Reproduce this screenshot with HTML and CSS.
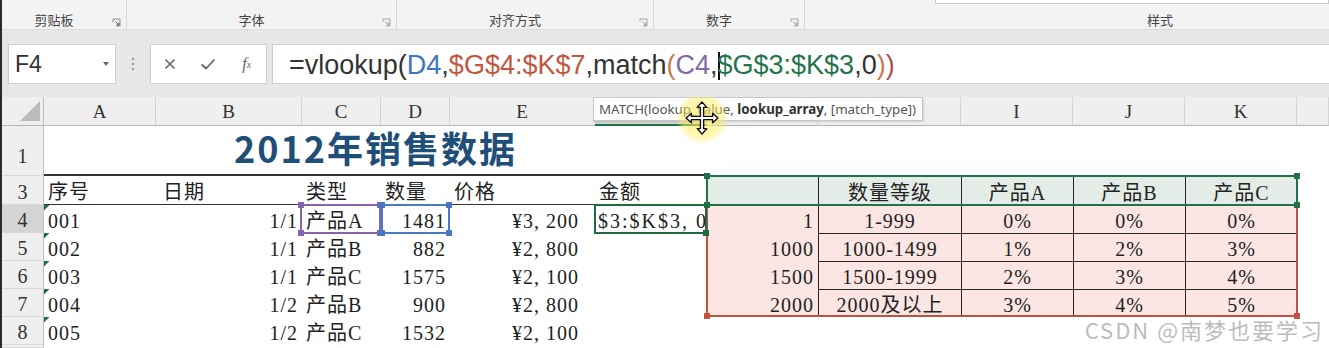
FILE: index.html
```html
<!DOCTYPE html>
<html lang="zh-CN">
<head>
<meta charset="UTF-8">
<meta name="viewport" content="width=device-width, initial-scale=1.0">
<title>2012年销售数据</title>
<link rel="stylesheet" href="styles.css">
</head>
<body>
<div class="app">

  <!-- ribbon, only the group labels are in view -->
  <div class="ribbon">
    <div class="group g1">
      <div class="glabel"><span>剪贴板</span><i class="launch"><svg width="9" height="9" viewBox="0 0 9 9"><path d="M1 4V1h7v7H4" fill="none" stroke="#8a8a8a"/><path d="M3.5 3.5L7 7M7 4.5V7H4.5" fill="none" stroke="#555"/></svg></i></div>
    </div>
    <div class="group g2">
      <div class="glabel"><span>字体</span><i class="launch"><svg width="9" height="9" viewBox="0 0 9 9"><path d="M1 4V1h7v7H4" fill="none" stroke="#a8a8a8"/><path d="M3.5 3.5L7 7M7 4.5V7H4.5" fill="none" stroke="#999"/></svg></i></div>
    </div>
    <div class="group g3">
      <div class="glabel"><span>对齐方式</span><i class="launch"><svg width="9" height="9" viewBox="0 0 9 9"><path d="M1 4V1h7v7H4" fill="none" stroke="#a8a8a8"/><path d="M3.5 3.5L7 7M7 4.5V7H4.5" fill="none" stroke="#999"/></svg></i></div>
    </div>
    <div class="group g4">
      <div class="glabel"><span>数字</span><i class="launch"><svg width="9" height="9" viewBox="0 0 9 9"><path d="M1 4V1h7v7H4" fill="none" stroke="#a8a8a8"/><path d="M3.5 3.5L7 7M7 4.5V7H4.5" fill="none" stroke="#999"/></svg></i></div>
    </div>
    <div class="group g5">
      <div class="gallery"></div>
      <div class="glabel"><span>样式</span></div>
    </div>
  </div>

  <!-- formula bar -->
  <div class="fbar">
    <div class="namebox"><span>F4</span><i class="drop"></i></div>
    <div class="dots"><svg width="4" height="14" viewBox="0 0 4 14"><circle cx="2" cy="2" r="1.2" fill="#9a9a9a"/><circle cx="2" cy="7" r="1.2" fill="#9a9a9a"/><circle cx="2" cy="12" r="1.2" fill="#9a9a9a"/></svg></div>
    <div class="btns">
      <span class="btn"><svg width="12" height="12" viewBox="0 0 12 12"><path d="M1.5 1.5l9 9M10.5 1.5l-9 9" stroke="#666" stroke-width="1.6"/></svg></span>
      <span class="btn"><svg width="16" height="12" viewBox="0 0 16 12"><path d="M1.5 6.5l4.5 4L14.5 1.5" fill="none" stroke="#666" stroke-width="1.8"/></svg></span>
      <span class="btn fx">f<sub>x</sub></span>
    </div>
    <div class="formula">=vlookup(<span class="blue">D4</span>,<span class="red">$G$4:$K$7</span>,match<span class="tan">(</span><span class="purple">C4</span>,<i class="caret"></i><span class="green">$G$3:$K$3</span>,0<span class="tan">)</span><span class="rose">)</span></div>
  </div>

  <!-- worksheet -->
  <div class="sheet">
    <div class="cells">
      <!-- column headers (F to H sit under the tooltip) -->
      <div class="corner"><svg width="20" height="20" viewBox="0 0 20 20"><polygon points="0,20 20,0 20,20" fill="#bcbcbc"/></svg></div>
      <div class="ch">A</div><div class="ch">B</div><div class="ch">C</div><div class="ch">D</div>
      <div class="ch">E</div><div class="ch sel"></div><div class="ch"></div><div class="ch"></div>
      <div class="ch">I</div><div class="ch">J</div><div class="ch">K</div><div class="ch"></div>

      <!-- row 1 -->
      <div class="rh r1">1</div>
      <div class="title">2012年销售数据</div>
      <div class="blank"></div>

      <!-- row 3 -->
      <div class="rh">3</div>
      <div class="c h3">序号</div>
      <div class="c h3 pb">日期</div>
      <div class="c h3">类型</div>
      <div class="c h3">数量</div>
      <div class="c h3">价格</div>
      <div class="c h3">金额</div>
      <div class="c tg"></div>
      <div class="c tg m vl">数量等级</div>
      <div class="c tg m vl">产品A</div>
      <div class="c tg m vl">产品B</div>
      <div class="c tg m vl">产品C</div>
      <div class="c"></div>

      <!-- row 4 -->
      <div class="rh sel">4</div>
      <div class="c tag">001</div>
      <div class="c r">1/1</div>
      <div class="c">产品A</div>
      <div class="c r">1481</div>
      <div class="c r pr">¥3, 200</div>
      <div class="c wide-txt">$3:$K$3, 0</div>
      <div class="c tp r">1</div>
      <div class="c tp m vl">1-999</div>
      <div class="c tp m vl">0%</div>
      <div class="c tp m vl">0%</div>
      <div class="c tp m vl">0%</div>
      <div class="c"></div>

      <!-- row 5 -->
      <div class="rh">5</div>
      <div class="c tag">002</div>
      <div class="c r">1/1</div>
      <div class="c">产品B</div>
      <div class="c r">882</div>
      <div class="c r pr">¥2, 800</div>
      <div class="c"></div>
      <div class="c tp r">1000</div>
      <div class="c tp m vl ht">1000-1499</div>
      <div class="c tp m vl ht">1%</div>
      <div class="c tp m vl ht">2%</div>
      <div class="c tp m vl ht">3%</div>
      <div class="c"></div>

      <!-- row 6 -->
      <div class="rh">6</div>
      <div class="c tag">003</div>
      <div class="c r">1/1</div>
      <div class="c">产品C</div>
      <div class="c r">1575</div>
      <div class="c r pr">¥2, 100</div>
      <div class="c"></div>
      <div class="c tp r">1500</div>
      <div class="c tp m vl ht">1500-1999</div>
      <div class="c tp m vl ht">2%</div>
      <div class="c tp m vl ht">3%</div>
      <div class="c tp m vl ht">4%</div>
      <div class="c"></div>

      <!-- row 7 -->
      <div class="rh">7</div>
      <div class="c tag">004</div>
      <div class="c r">1/2</div>
      <div class="c">产品B</div>
      <div class="c r">900</div>
      <div class="c r pr">¥2, 800</div>
      <div class="c"></div>
      <div class="c tp r">2000</div>
      <div class="c tp m vl ht">2000及以上</div>
      <div class="c tp m vl ht">3%</div>
      <div class="c tp m vl ht">4%</div>
      <div class="c tp m vl ht">5%</div>
      <div class="c"></div>

      <!-- row 8 -->
      <div class="rh">8</div>
      <div class="c tag">005</div>
      <div class="c r">1/2</div>
      <div class="c">产品C</div>
      <div class="c r">1532</div>
      <div class="c r pr">¥2, 100</div>
      <div class="rest"></div>

      <!-- row 9, cut off -->
      <div class="rh"></div>
      <div class="rest wide"></div>
    </div>

    <!-- range highlights drawn over the cells -->
    <div class="marks">
      <div class="box red rng-body"><i class="tl"></i><i class="tr"></i><i class="bl"></i><i class="br"></i></div>
      <div class="box green rng-head"><i class="tl"></i><i class="tr"></i><i class="bl"></i><i class="br"></i></div>
      <div class="box purple ref-c4"><i class="tl"></i><i class="tr"></i><i class="bl"></i><i class="br"></i></div>
      <div class="box blue ref-d4"><i class="tl"></i><i class="tr"></i><i class="bl"></i><i class="br"></i></div>
      <div class="box active"><i class="br"></i></div>
      <div class="tip">MATCH(lookup_value, <b>lookup_array</b>, [match_type])</div>
    </div>

    <div class="cursor">
      <svg width="34" height="34" viewBox="0 0 32 32"><polygon points="16,1 20.5,6 17.5,6 17.5,14.5 26,14.5 26,11.5 31,16 26,20.5 26,17.5 17.5,17.5 17.5,26 20.5,26 16,31 11.5,26 14.5,26 14.5,17.5 6,17.5 6,20.5 1,16 6,11.5 6,14.5 14.5,14.5 14.5,6 11.5,6" fill="#fff" stroke="#111" stroke-width="1.3" stroke-linejoin="round"/></svg>
    </div>
    <div class="watermark">CSDN @南梦也要学习</div>
  </div>
</div>
</body>
</html>
```

FILE: styles.css
```css
* {
  box-sizing: border-box;
}

html, body {
  margin: 0;
  padding: 0;
}

body {
  background: #fff;
  font-family: "Noto Sans CJK SC", "Noto Sans", sans-serif;
  overflow: hidden;
}

.app {
  width: 1329px;
  height: 348px;
  border-left: 2px solid #2b2b2b;
  display: flex;
  flex-direction: column;
  overflow: hidden;
}

/* ribbon */
.ribbon {
  display: flex;
  flex: none;
  height: 30px;
  background: #f3f3f3;
  border-bottom: 1px solid #dcdcdc;
  overflow: hidden;
}

.group {
  flex: none;
  display: flex;
  flex-direction: column;
  justify-content: flex-end;
  height: 29px;
  padding-bottom: 1px;
  border-right: 1px solid #d9d9d9;
}

.g1 { width: 125px; }
.g2 { width: 270px; }
.g3 { width: 257px; }
.g4 { width: 151px; }
.g5 { width: 730px; border-right: none; }

.glabel {
  display: flex;
  align-items: center;
}

.glabel span {
  flex: 1;
  text-align: center;
  font-size: 13px;
  line-height: 16px;
  color: #444;
}

.g5 .glabel span {
  padding-right: 20px;
}

.launch {
  width: 20px;
  display: flex;
  justify-content: center;
  padding-top: 5px;
}

.gallery {
  margin: 0 0 auto 130px;
  width: 394px;
  height: 4px;
  background: #fff;
  border: 1px solid #c9c9c9;
  border-top: none;
}

/* formula bar */
.fbar {
  display: flex;
  align-items: center;
  flex: none;
  height: 67px;
  padding: 1px 0 0 6px;
  background: #e7e7e7;
}

.namebox {
  width: 108px;
  height: 40px;
  display: flex;
  align-items: center;
  justify-content: space-between;
  padding: 0 6px 0 6px;
  background: #fff;
  border: 1px solid #d0d0d0;
  font: 23px "Liberation Sans", Arial, sans-serif;
  color: #333;
}

.drop {
  width: 0;
  height: 0;
  border-left: 3.5px solid transparent;
  border-right: 3.5px solid transparent;
  border-top: 4px solid #666;
}

.dots {
  width: 34px;
  display: flex;
  justify-content: center;
}

.btns {
  width: 117px;
  height: 40px;
  display: flex;
  background: #fff;
  border: 1px solid #d0d0d0;
}

.btn {
  flex: 1;
  display: flex;
  align-items: center;
  justify-content: center;
}

.fx {
  font: italic 16px "Liberation Serif", serif;
  color: #666;
}

.fx sub {
  font-size: 10px;
  vertical-align: -1px;
}

.formula {
  flex: 1;
  height: 40px;
  margin-left: 5px;
  padding-left: 16px;
  background: #fff;
  border: 1px solid #d0d0d0;
  border-right: none;
  font: 27px/40px "Liberation Sans", Arial, sans-serif;
  color: #333;
  white-space: nowrap;
  overflow: hidden;
}

.blue { color: #3f74c0; }
.red { color: #c4553f; }
.tan { color: #c47c4c; }
.purple { color: #7d6aab; }
.green { color: #23744a; }
.rose { color: #a9504f; }

.caret {
  display: inline-block;
  width: 0;
  height: 28px;
  margin-right: -2px;
  border-left: 2px solid #111;
  vertical-align: -6px;
}

/* worksheet */
.sheet {
  position: relative;
  flex: 1;
  display: grid;
  overflow: hidden;
}

.cells,
.marks {
  grid-area: 1 / 1;
  display: grid;
  grid-template-columns: 42px 112px 146px 79px 69px 145px 112px 111px 143px 112px 112px 112px 1fr;
  grid-template-rows: 29px 50px 29px 28px 28px 28px 28px 28px 1fr;
}

.marks {
  pointer-events: none;
}

.corner {
  display: flex;
  align-items: flex-end;
  justify-content: flex-end;
  padding: 0 3px 4px 0;
  background: #efefef;
  border-right: 1px solid #bdbdbd;
  border-bottom: 1px solid #b5b5b5;
}

.ch {
  display: flex;
  align-items: center;
  justify-content: center;
  padding-top: 2px;
  background: #efefef;
  border-right: 1px solid #d4d4d4;
  border-bottom: 1px solid #b5b5b5;
  font: 19px "Liberation Serif", serif;
  color: #333;
}

.ch.sel {
  background: #d5d5d5;
  border-bottom: 2px solid #217346;
}

.rh {
  display: flex;
  align-items: flex-end;
  justify-content: center;
  background: #efefef;
  border-right: 1px solid #bdbdbd;
  border-bottom: 1px solid #dadada;
  font: 20px/24px "Liberation Serif", serif;
  color: #333;
}

.rh.r1 {
  padding-bottom: 7px;
}

.rh.sel {
  background: #d4d4d4;
}

.title {
  grid-column: span 6;
  display: flex;
  align-items: flex-end;
  justify-content: center;
  padding-bottom: 7px;
  border-bottom: 2px solid #333;
  font: 700 36px/40px "Noto Sans CJK SC", sans-serif;
  letter-spacing: 2px;
  color: #1f4e79;
}

.blank {
  grid-column: span 6;
}

.rest {
  grid-column: span 7;
}

.rest.wide {
  grid-column: span 12;
}

.c {
  display: flex;
  align-items: flex-end;
  padding: 0 4px;
  font: 20px/24px "Liberation Serif", "Noto Sans CJK SC", serif;
  letter-spacing: 1px;
  color: #222;
  white-space: nowrap;
  overflow: hidden;
}

.c.r { justify-content: flex-end; }
.c.m { justify-content: center; }
.c.pr { padding-right: 16px; }
.c.pb { padding-left: 7px; }
.c.wide-txt { letter-spacing: 2px; padding-left: 3px; }

.h3 {
  border-bottom: 1px solid #333;
}

/* "number stored as text" marker */
.tag {
  background: linear-gradient(135deg, #217346 0 4px, transparent 4px) no-repeat;
  background-size: 8px 8px;
}

.tg { background-color: #e3ece6; }
.tp { background-color: #fbe6e3; }
.vl { border-left: 1px solid #262626; }
.ht { border-top: 1px solid #262626; }

/* range outlines */
.box {
  position: relative;
  border: 2px solid currentColor;
}

.box i {
  position: absolute;
  width: 6px;
  height: 6px;
  background: currentColor;
}

.box .tl { left: -4px; top: -4px; }
.box .tr { right: -4px; top: -4px; }
.box .bl { left: -4px; bottom: -4px; }
.box .br { right: -4px; bottom: -4px; }

.rng-body {
  grid-row: 4 / 8;
  grid-column: 8 / 13;
  color: #c45040;
  margin: -1px -1px 0 -1px;
}

.rng-head {
  grid-row: 3;
  grid-column: 8 / 13;
  color: #1f7347;
  margin: -1px -1px -1px -1px;
}

.ref-c4 {
  grid-row: 4;
  grid-column: 4;
  color: #8266ad;
  margin: -1px 0 -1px -2px;
}

.ref-d4 {
  grid-row: 4;
  grid-column: 5;
  color: #4a78c2;
  margin: -1px 0 -1px 0;
}

.active {
  grid-row: 4;
  grid-column: 7;
  color: #1d6b40;
  margin: -1px 0 -1px -1px;
}

.tip {
  grid-row: 1;
  grid-column: 7 / 12;
  justify-self: start;
  align-self: start;
  width: 330px;
  height: 24px;
  margin-left: -2px;
  padding: 0 5px;
  background: #fff;
  border: 1px solid #c6c6c6;
  box-shadow: 1px 1px 2px rgba(0, 0, 0, 0.12);
  font: 13.3px/22px "Noto Sans", sans-serif;
  color: #555;
  white-space: nowrap;
  overflow: hidden;
}

.tip b {
  color: #333;
}

.cursor {
  position: absolute;
  left: 674px;
  top: -5px;
  width: 52px;
  height: 52px;
  display: flex;
  align-items: center;
  justify-content: center;
  border-radius: 50%;
  background: radial-gradient(circle, rgba(255, 236, 90, 0.7) 0, rgba(255, 236, 90, 0.45) 55%, rgba(255, 236, 90, 0) 72%);
}

.watermark {
  position: absolute;
  right: 5px;
  bottom: 8px;
  font: 22px/22px "Noto Sans CJK SC", sans-serif;
  letter-spacing: 2px;
  color: rgba(165, 165, 165, 0.75);
  text-shadow: 0 0 2px #fff;
}
```
